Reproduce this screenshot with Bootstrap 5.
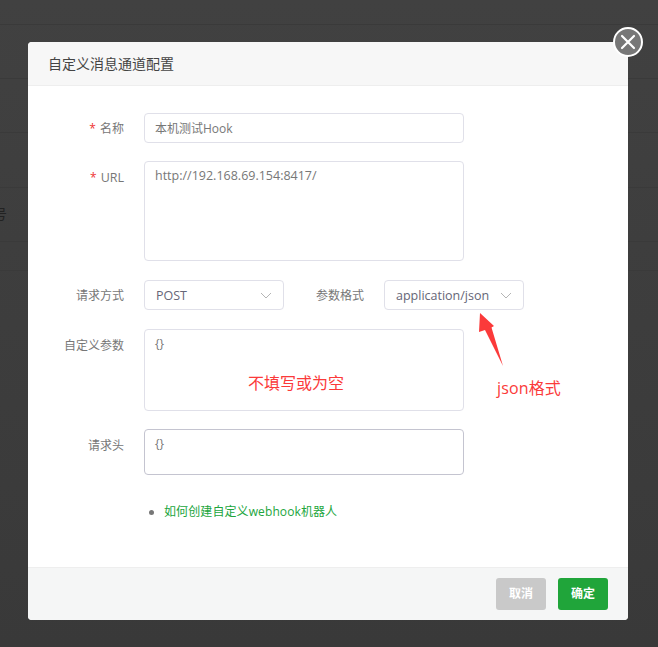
<!DOCTYPE html>
<html lang="zh-CN">
<head>
<meta charset="utf-8">
<title>自定义消息通道配置</title>
<link href="https://cdn.jsdelivr.net/npm/bootstrap@5.3.0/dist/css/bootstrap.min.css" rel="stylesheet">
<style>
html,body{height:647px;overflow:hidden}
body{background:#3f3f3f;font-family:"Open Sans","Noto Sans CJK SC",sans-serif;font-size:12px;color:#666;position:relative}
.bg-rows{height:647px;background:linear-gradient(#414141,#393939)}
.bg-row{border-bottom:1px solid #3a3a3a;color:#222;font-size:14px;overflow:hidden}
.r1{height:25px}.r2{height:54px}.r3{height:54px}.r4{height:55px}
.r5{height:54px;display:flex;align-items:flex-end;line-height:1}
.r6{height:29px}
.r5 span{margin-left:-7px;padding-bottom:20px}
.dlg-wrap{position:absolute;inset:42px 30px 27px 28px}
.dlg{width:600px;height:578px;background:#fff;border-radius:4px;display:flex;flex-direction:column;position:relative}
.dlg-head{height:44px;background:#f7f7f7;border-bottom:1px solid #eee;padding:0 20px;font-size:14px;color:#444;line-height:43px;border-radius:4px 4px 0 0;flex:none}
.dlg-body{flex:1;padding:27px 0 0 0}
.dlg-foot{height:53px;flex:none;background:#f5f6f6;border-top:1px solid #eee;border-radius:0 0 4px 4px;padding:10px 20px 0 0;gap:12px}
.dlg-x{position:absolute;right:-15px;top:-15px;width:30px;height:30px;border-radius:50%;background:#777;border:2px solid #fff;padding:0;display:flex;align-items:center;justify-content:center}
.fld-row{display:flex;margin-bottom:18px}
.fld-row.gap19{margin-bottom:19px}
.fld-lbl{width:96px;height:30px;margin-right:20px;text-align:right;line-height:32px;color:#777;flex:none}
.fld-lbl.tall{line-height:34px}
.fld-lbl2{width:80px;height:30px;margin:0 20px 0 0;text-align:right;line-height:32px;color:#777;flex:none}
.req{color:#e33;margin-right:1px}
.lat{font-size:12.5px}
.fld{width:320px;border:1px solid #e0e0e9;border-radius:4px;padding:0 10px;color:#777;font-size:12px;background:#fff;box-shadow:none}
.fld-in{height:30px;line-height:30px}
.fld-area{resize:none;padding:5px 10px;line-height:18px;display:block;outline:0}
.fld-area.lat{font-size:12.5px}
.h100{height:100px}.h82{height:82px}.h46{height:46px;border-color:#c4c4d0}
.fld-sel{width:140px;height:30px;border:1px solid #e0e0e9;border-radius:4px;padding:1px 11px 0;line-height:28px;color:#667;display:flex;justify-content:space-between;align-items:center;background:#fff;font-size:12.5px}
.fld-sel svg{flex:none}
.help{margin:28px 0 0 121px;padding:0;list-style:none;color:#21a53d;line-height:18px}
.help i{width:5px;height:5px;background:#777;border-radius:50%;display:block}
.help li{gap:10px}
.help a{color:#21a53d;text-decoration:none;letter-spacing:.1px}
.act{width:50px;height:32px;border:0;border-radius:3px;color:#fff;font-size:12px;font-weight:700;padding:0}
.act-off{background:#c9c9c9}
.act-ok{background:#20a53a}
.note{position:absolute;color:#fb3a3a;font-size:16px;line-height:22px;white-space:nowrap}
.n1{left:220px;top:330px}
.n2{left:469px;top:335px;letter-spacing:.15px}
.arrow{position:absolute;left:438px;top:268px}
</style>
</head>
<body>
<div class="bg-rows">
  <div class="bg-row r1"></div>
  <div class="bg-row r2"></div>
  <div class="bg-row r3"></div>
  <div class="bg-row r4"></div>
  <div class="bg-row r5"><span>号</span></div>
  <div class="bg-row r6"></div>
</div>
<div class="dlg-wrap">
  <div class="dlg">
    <button type="button" class="dlg-x" aria-label="关闭">
      <svg width="16" height="16" viewBox="0 0 16 16"><path d="M2 2L14 14M14 2L2 14" stroke="#fff" stroke-width="2.2" stroke-linecap="round" fill="none"/></svg>
    </button>
    <div class="dlg-head">自定义消息通道配置</div>
    <div class="dlg-body">
      <div class="fld-row">
        <div class="fld-lbl"><span class="req">*</span> 名称</div>
        <div class="fld fld-in">本机测试Hook</div>
      </div>
      <div class="fld-row gap19">
        <div class="fld-lbl tall"><span class="req">*</span> <span class="lat">URL</span></div>
        <textarea class="fld fld-area h100 lat">http://192.168.69.154:8417/</textarea>
      </div>
      <div class="fld-row gap19">
        <div class="fld-lbl">请求方式</div>
        <div class="fld-sel"><span>POST</span><svg width="12" height="7" viewBox="0 0 12 7"><path d="M1 1L6 6L11 1" stroke="#b5b5b5" fill="none"/></svg></div>
        <div class="fld-lbl2">参数格式</div>
        <div class="fld-sel"><span>application/json</span><svg width="12" height="7" viewBox="0 0 12 7"><path d="M1 1L6 6L11 1" stroke="#b5b5b5" fill="none"/></svg></div>
      </div>
      <div class="fld-row">
        <div class="fld-lbl tall">自定义参数</div>
        <textarea class="fld fld-area h82">{}</textarea>
      </div>
      <div class="fld-row">
        <div class="fld-lbl tall">请求头</div>
        <textarea class="fld fld-area h46">{}</textarea>
      </div>
      <ul class="help"><li class="d-flex align-items-center"><i></i><a href="#">如何创建自定义webhook机器人</a></li></ul>
    </div>
    <div class="dlg-foot d-flex justify-content-end">
      <button type="button" class="act act-off">取消</button>
      <button type="button" class="act act-ok">确定</button>
    </div>
    <span class="note n1">不填写或为空</span>
    <span class="note n2">json格式</span>
    <svg class="arrow" width="40" height="60" viewBox="0 0 40 60"><path d="M14 3L28 16L25.500 17.500L37 56L19 20L13 22Z" fill="#fb3a3a"/></svg>
  </div>
</div>
</body>
</html>
